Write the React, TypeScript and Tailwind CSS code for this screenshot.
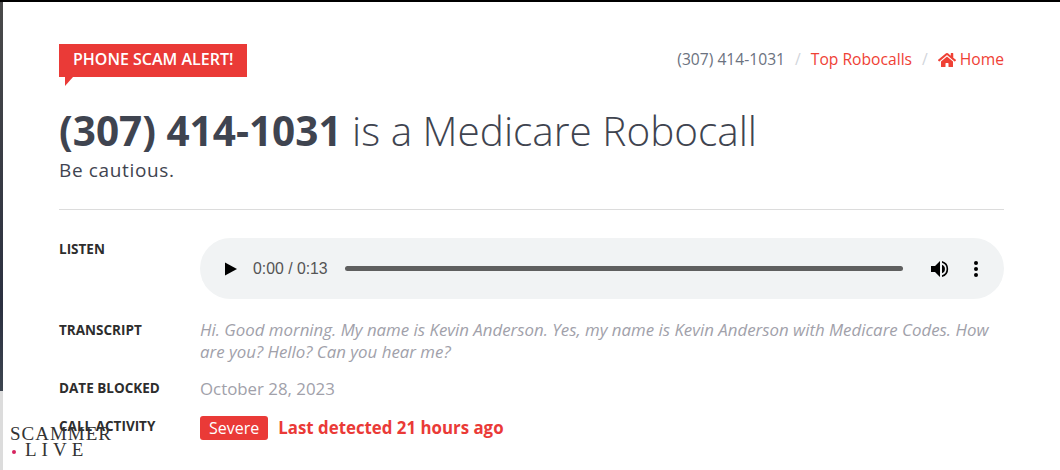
import React from 'react';
import { FaHome } from 'react-icons/fa';

const Row = ({ label, children }: { label: string; children: React.ReactNode }) => (
  <div className="flex">
    <div className="w-[141px] shrink-0 pt-[1px] text-[13.5px] font-bold uppercase leading-[20px] text-[#2d2d2d]">{label}</div>
    <div className="flex-1">{children}</div>
  </div>
);

const AudioPlayer = () => (
  <div className="flex h-[61px] items-center rounded-[31px] bg-[#f1f3f4] pl-6 pr-[26px] font-['Liberation_Sans',sans-serif] text-[15.8px] text-[#555]">
    <svg viewBox="0 0 14 16" className="h-4 w-[14px] fill-black">
      <path d="M1 1.5v13l12-6.5z" />
    </svg>
    <span className="ml-[15px] whitespace-nowrap">0:00 / 0:13</span>
    <div className="ml-[17px] h-[5px] flex-1 rounded-full bg-[#5f5f5f]" />
    <svg viewBox="0 0 20 20" className="ml-[27px] h-[20px] w-[20px] fill-black">
      <path d="M1 7v6h4l5 5V2L5 7H1z" />
      <path d="M12 5.7v8.6a4.6 4.6 0 0 0 0-8.6z" />
      <path d="M12 1.9v1.9a6.5 6.5 0 0 1 0 12.4v1.9a8.4 8.4 0 0 0 0-16.2z" />
    </svg>
    <div className="ml-[24px] flex w-[4px] flex-col gap-[2px]">
      <div className="h-1 w-1 rounded-full bg-black" />
      <div className="h-1 w-1 rounded-full bg-black" />
      <div className="h-1 w-1 rounded-full bg-black" />
    </div>
  </div>
);

export default function App() {
  return (
    <div className="relative flex h-[470px] w-[1060px] flex-col overflow-hidden bg-white font-['Open_Sans',sans-serif]">
      <div className="h-[2px] bg-black" />
      <div className="flex flex-1">
        <div className="flex w-[3px] flex-col">
          <div className="h-[389px] bg-linear-to-b from-[#4a4a4a] via-[#2b3040] via-[78%] to-[#3d4550]" />
          <div className="flex-1 bg-[#dcdcdc]" />
        </div>
        <div className="flex-1 pl-[56px] pr-[56px] pt-[42px]">
          <div className="flex items-start justify-between">
            <div className="relative flex h-[33px] items-center bg-[#ea3a37] px-[14px] pb-[3px] text-[16px] font-semibold text-white">
              PHONE SCAM ALERT!
              <div className="absolute left-[6px] top-[33px] h-0 w-0 border-r-[8px] border-t-[9px] border-r-transparent border-t-[#ea3a37]" />
            </div>
            <div className="flex items-center pt-[4px] text-[15.65px] text-[#6b7280]">
              <span>(307) 414-1031</span>
              <span className="mx-[10px] text-[#d1d5db]">/</span>
              <span className="text-[#ef4135]">Top Robocalls</span>
              <span className="mx-[10px] text-[#d1d5db]">/</span>
              <span className="flex items-center gap-[4px] text-[#ef4135]">
                <FaHome className="text-[18px]" />
                Home
              </span>
            </div>
          </div>

          <h1 className="mt-[27px] text-[40.5px] font-light leading-[54px] text-[#3f4450]">
            <span className="font-bold">(307) 414-1031</span> is a Medicare Robocall
          </h1>
          <p className="text-[19px] leading-[24px] tracking-[0.65px] text-[#3f4450]">Be cautious.</p>

          <div className="mb-[28px] mt-[27px] border-t border-[#dcdcdc]" />

          <Row label="Listen">
            <AudioPlayer />
          </Row>

          <div className="mt-[20px]">
            <Row label="Transcript">
              <p className="text-[16.85px] italic leading-[22px] text-[#a1a1aa]">
                Hi. Good morning. My name is Kevin Anderson. Yes, my name is Kevin Anderson with Medicare Codes. How
                are you? Hello? Can you hear me?
              </p>
            </Row>
          </div>

          <div className="mt-[14px]">
            <Row label="Date Blocked">
              <span className="text-[16.85px] leading-[24px] text-[#a1a1aa]">October 28, 2023</span>
            </Row>
          </div>

          <div className="mt-[14px]">
            <Row label="Call Activity">
              <div className="flex items-center">
                <span className="rounded-[3px] bg-[#ea3a37] px-[9px] text-[16px] leading-[24px] text-white">Severe</span>
                <span className="ml-[10px] text-[16.85px] font-bold text-[#ea3a37]">Last detected 21 hours ago</span>
              </div>
            </Row>
          </div>
        </div>
      </div>

      <div className="absolute left-[10px] top-[426px] font-['Liberation_Serif',serif] text-[19px] leading-[16px] text-[#333]">
        <div className="tracking-[1px]">SCAMMER</div>
        <div className="flex items-center tracking-[5px]">
          <span className="ml-[2px] mr-[9px] mt-[4px] h-[4px] w-[4px] rounded-full bg-[#d6245f]" />
          LIVE
        </div>
      </div>
    </div>
  );
}
